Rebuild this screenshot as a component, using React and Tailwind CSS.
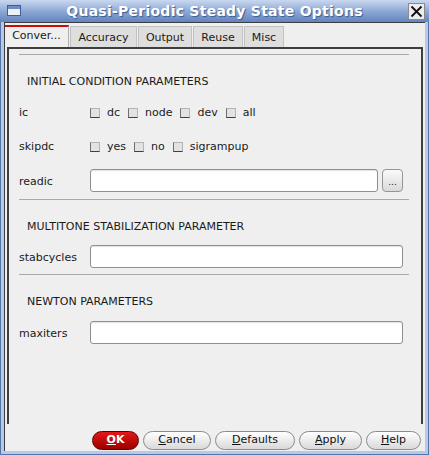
import React from 'react'

const font = { fontFamily: '"DejaVu Sans", "Liberation Sans", sans-serif' }

function Sep() {
  return <div className="h-px bg-[#a9a9a9] shrink-0" />
}

function Check({ label }) {
  return (
    <div className="flex items-center">
      <span className="w-[10px] h-[10px] bg-[#e2e2e2] border border-[#b4b4b4] border-b-[#3f3f3f] border-l-[#6f6f6f]" />
      <span className="ml-[7px] mr-[8px] pt-px">{label}</span>
    </div>
  )
}

function Field({ label, browse }) {
  return (
    <div className="flex items-center h-[23px] shrink-0">
      <span className="w-[71px] pt-[3px]">{label}</span>
      <div className="flex-1 h-full bg-white border border-[#8f8f8f] rounded-[3px] shadow-[inset_0_1px_1px_rgba(0,0,0,0.12)]" />
      {browse && (
        <div className="ml-[4px] w-[21px] h-full rounded-[4px] border border-[#959595] bg-gradient-to-b from-[#fafafa] to-[#dadada] flex items-center justify-center text-[9px] leading-none pt-[4px]">...</div>
      )}
      <div className="w-[6px]" />
    </div>
  )
}

function Heading({ children, h }) {
  return <div className={`${h} pt-[9px] pl-[8px] flex items-center shrink-0`}>{children}</div>
}

function Btn({ w, children, primary }) {
  return (
    <div
      className={`h-[19px] rounded-full flex items-center justify-center text-[11px] ${w} ${primary ? 'bg-gradient-to-b from-[#e41818] to-[#9c0000] border border-[#5a0000] text-white font-bold' : 'bg-gradient-to-b from-[#ffffff] to-[#d9d9d9] border border-[#8a8a8a] text-[#111]'}`}
    >
      {children}
    </div>
  )
}

const tabs = [
  { name: 'Conver...', w: 'w-[64px]' },
  { name: 'Accuracy', w: 'w-[67px]' },
  { name: 'Output', w: 'w-[54px]' },
  { name: 'Reuse', w: 'w-[50px]' },
  { name: 'Misc', w: 'w-[40px]' },
]

export default function App() {
  return (
    <div style={font} className="w-[429px] h-[455px] flex flex-col bg-[#b6c9e7] border-l border-r border-b border-[#5574ab] text-[11px] text-[#1a1a1a]">
      {/* title bar */}
      <div className="h-[22px] shrink-0 relative flex items-center justify-center bg-gradient-to-b from-[#c9d8ef] via-[#8fa9d6] to-[#6384bf] -mx-px">
        <div className="absolute left-[7px] top-[5px] w-[14px] h-[11px] border border-[#3f5f99] bg-[#eef1f5] flex flex-col">
          <div className="h-[3px] bg-[#6b8cc4]" />
        </div>
        <span className="text-white font-bold text-[14px] tracking-[0.25px] [text-shadow:1px_1px_1px_#3b5a91]">Quasi-Periodic Steady State Options</span>
        <div className="absolute right-[4px] top-[3px] w-[17px] h-[17px] bg-[#ececec] border border-[#8a8a8a] flex items-center justify-center">
          <svg width="13" height="13" viewBox="0 0 13 13">
            <path d="M1.5 1.5 L11.5 11.5 M11.5 1.5 L1.5 11.5" stroke="#111" strokeWidth="1.8" />
          </svg>
        </div>
      </div>

      {/* body */}
      <div className="h-[429px] ml-[3px] mr-[3px] flex flex-col bg-[#efefef] border-t border-l border-[#3d3d3d]">
        {/* tabs */}
        <div className="h-[24px] shrink-0 flex items-start">
          {tabs.map((t, i) =>
            i === 0 ? (
              <div key={t.name} className={`${t.w} mt-[2px] h-[22px] bg-[#efefef] border-t-2 border-[#cc0a0a] border-r border-r-[#b0b0b0] flex items-center justify-center pb-[2px]`}>
                {t.name}
              </div>
            ) : (
              <div key={t.name} className={`${t.w} ml-px mt-[3px] h-[21px] bg-[#dedede] border border-[#c2c2c2] border-b-0 flex items-center justify-center pt-[3px]`}>
                {t.name}
              </div>
            )
          )}
        </div>

        {/* panel */}
        <div className="h-[377px] shrink-0 ml-[2px] mr-[2px] border-t-2 border-l-2 border-r-2 border-[#3e3e3e] flex flex-col pl-[10px] pr-[12px]">
          <div className="h-[5px] shrink-0" />
          <Sep />
          <Heading h="h-[45px]">INITIAL CONDITION PARAMETERS</Heading>
          <div className="h-[26px] flex items-center shrink-0">
            <span className="w-[71px]">ic</span>
            <Check label="dc" />
            <Check label="node" />
            <Check label="dev" />
            <Check label="all" />
          </div>
          <div className="h-[8px] shrink-0" />
          <div className="h-[26px] flex items-center shrink-0">
            <span className="w-[71px]">skipdc</span>
            <Check label="yes" />
            <Check label="no" />
            <Check label="sigrampup" />
          </div>
          <div className="h-[9px] shrink-0" />
          <Field label="readic" browse />
          <div className="h-[7px] shrink-0" />
          <Sep />
          <Heading h="h-[45px]">MULTITONE STABILIZATION PARAMETER</Heading>
          <Field label="stabcycles" />
          <div className="h-[6px] shrink-0" />
          <Sep />
          <Heading h="h-[46px]">NEWTON PARAMETERS</Heading>
          <Field label="maxiters" />
        </div>

        {/* buttons */}
        <div className="h-[27px] shrink-0 pt-[7px] pr-[4px] flex justify-end gap-[4px]">
          <Btn w="w-[47px]" primary><span className="underline">O</span>K</Btn>
          <Btn w="w-[68px]"><span className="underline">C</span>ancel</Btn>
          <Btn w="w-[80px]"><span className="underline">D</span>efaults</Btn>
          <Btn w="w-[63px]"><span className="underline">A</span>pply</Btn>
          <Btn w="w-[55px]"><span className="underline">H</span>elp</Btn>
        </div>
      </div>
    </div>
  )
}
